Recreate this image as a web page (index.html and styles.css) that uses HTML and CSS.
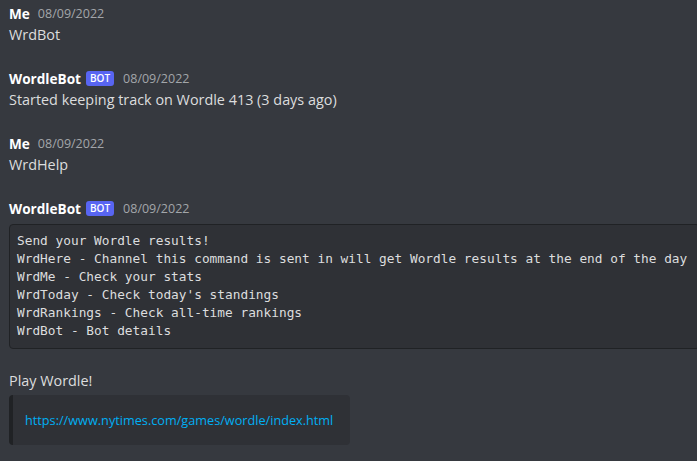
FILE: index.html
```html
<!DOCTYPE html>
<html>
<head>
<meta charset="utf-8">
<link rel="stylesheet" href="styles.css">
</head>
<body>
<div class="chat">
  <div class="msg">
    <div class="head"><span class="name">Me</span><span class="time">08/09/2022</span></div>
    <div class="text">WrdBot</div>
  </div>
  <div class="msg">
    <div class="head"><span class="name">WordleBot</span><span class="badge">BOT</span><span class="time">08/09/2022</span></div>
    <div class="text">Started keeping track on Wordle 413 (3 days ago)</div>
  </div>
  <div class="msg">
    <div class="head"><span class="name">Me</span><span class="time">08/09/2022</span></div>
    <div class="text">WrdHelp</div>
  </div>
  <div class="msg">
    <div class="head"><span class="name">WordleBot</span><span class="badge">BOT</span><span class="time">08/09/2022</span></div>
    <pre class="code">Send your Wordle results!
WrdHere - Channel this command is sent in will get Wordle results at the end of the day
WrdMe - Check your stats
WrdToday - Check today's standings
WrdRankings - Check all-time rankings
WrdBot - Bot details</pre>
    <div class="text play">Play Wordle!</div>
    <div class="embed"><a class="link">https://www.nytimes.com/games/wordle/index.html</a></div>
  </div>
</div>
</body>
</html>
```
FILE: styles.css
```css
html, body {
  margin: 0;
  padding: 0;
  background: #36393f;
  overflow: hidden;
}
body {
  font-family: "Open Sans", "Noto Sans", sans-serif;
  color: #dcddde;
}
.chat {
  padding: 2px 0 0 9px;
  display: flex;
  flex-direction: column;
  gap: 21px;
}
.head {
  display: flex;
  align-items: center;
  height: 22px;
}
.name {
  font-weight: 700;
  font-size: 13.6px;
  color: #ffffff;
}
.time {
  font-size: 12.5px;
  color: #a3a6aa;
  margin-left: 8px;
}
.badge {
  background: #5865f2;
  color: #fff;
  font-size: 10px;
  font-weight: 600;
  border-radius: 3px;
  padding: 1px 4px;
  margin-left: 5px;
  line-height: 13px;
}
.badge + .time {
  margin-left: 9px;
}
.text {
  font-size: 14.4px;
  line-height: 22px;
}
.code {
  margin: 5px 0 0 0;
  width: max-content;
  background: #2f3136;
  border: 1px solid #202225;
  border-radius: 4px;
  padding: 7px 12px 8px 7px;
  font-family: "DejaVu Sans Mono", monospace;
  font-size: 12.8px;
  line-height: 18px;
  color: #dcddde;
}
.play {
  margin-top: 21px;
}
.embed {
  margin-top: 3px;
  width: 341px;
  box-sizing: border-box;
  background: #2f3136;
  border-left: 4px solid #202225;
  border-radius: 4px;
  padding: 14px 12px 14px 12px;
  font-size: 12.7px;
  line-height: 22px;
}
.link {
  color: #00aff4;
}
```
